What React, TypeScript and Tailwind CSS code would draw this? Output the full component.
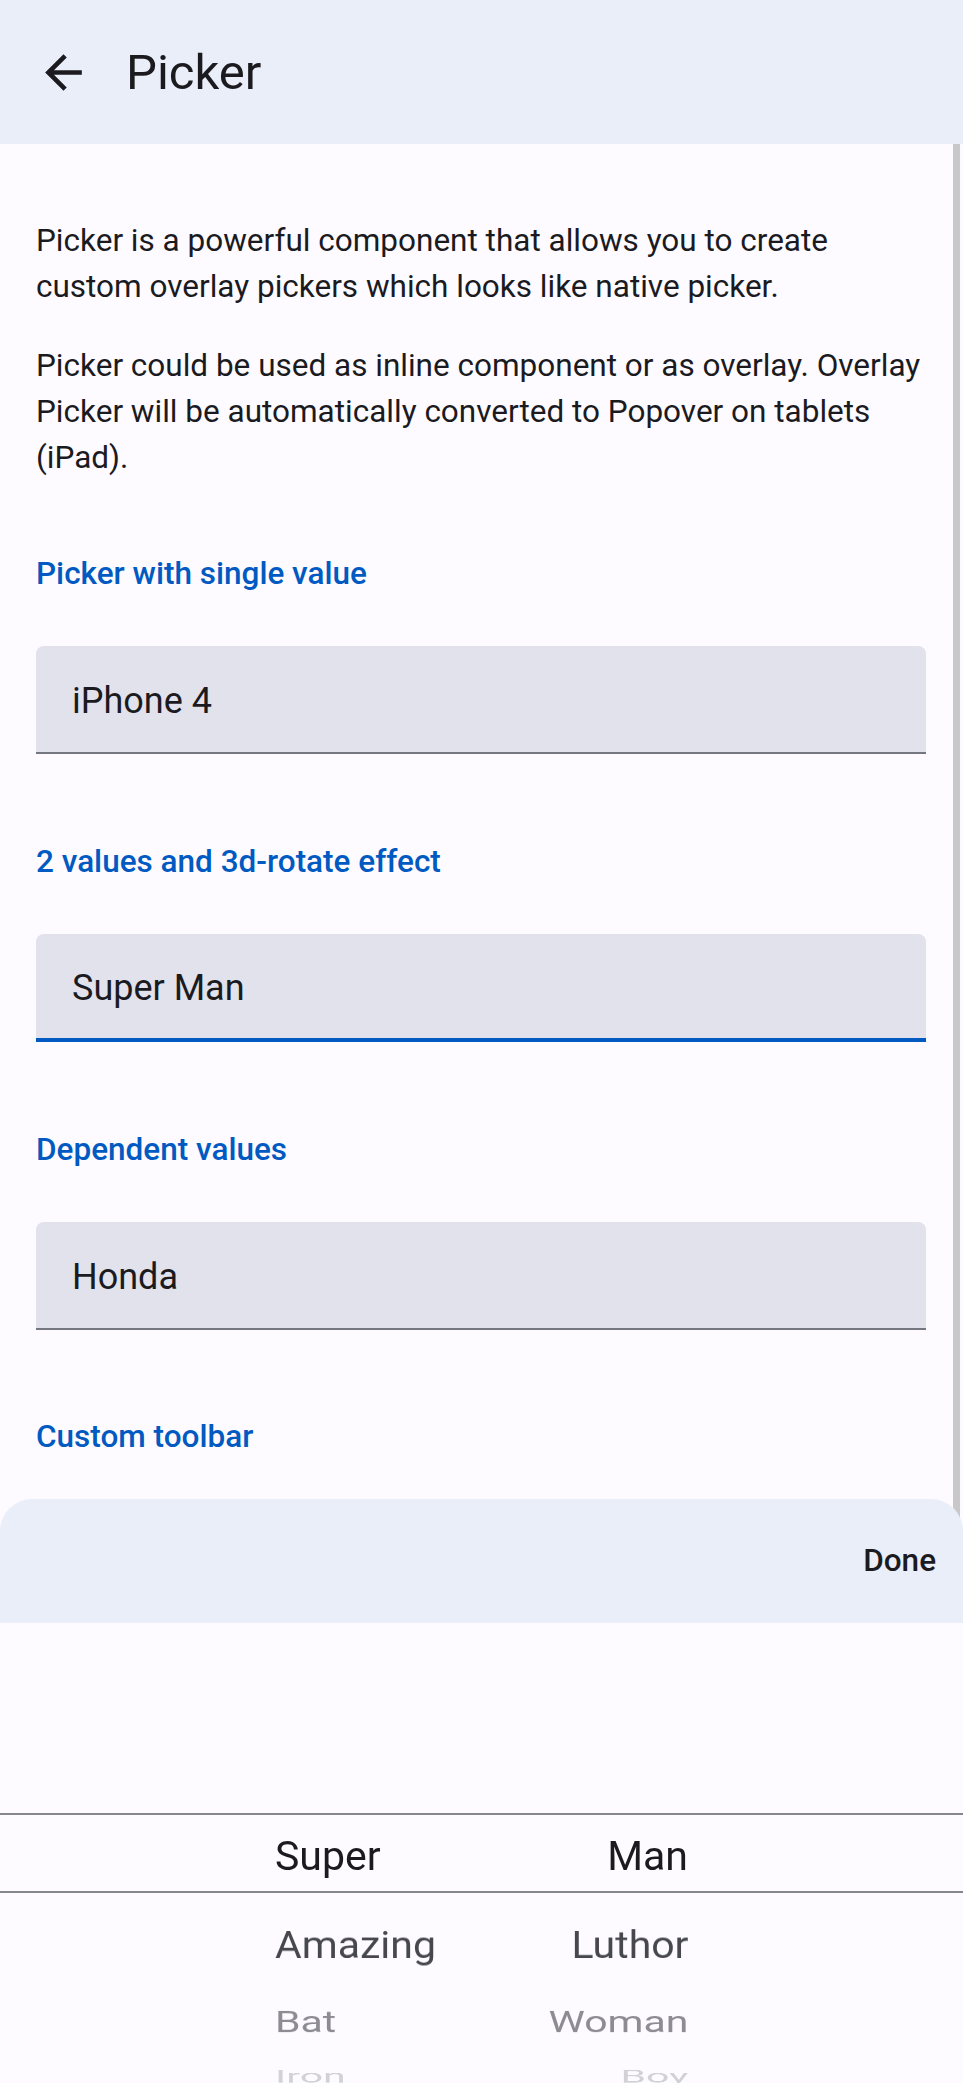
import React from 'react';

const THETA = 21.2;
const RADIUS = 246;
const ITEM_COLORS = ['#1b1b1f', '#47484e', '#8c8c92', '#d2d2d6'];

const firstNames = ['Super', 'Amazing', 'Bat', 'Iron'];
const lastNames = ['Man', 'Luthor', 'Woman', 'Boy'];

function BackArrow() {
  return (
    <svg width="55" height="55" viewBox="0 0 24 24" fill="#1b1b1f" aria-hidden>
      <path d="M20 11H7.83l5.59-5.59L12 4l-8 8 8 8 1.41-1.41L7.83 13H20v-2z" />
    </svg>
  );
}

function Field({ value, active }: { value: string; active?: boolean }) {
  return (
    <div
      className={
        'h-[108px] rounded-t-[8px] bg-[#e1e2ec] flex items-center pl-[36px] pt-[4px] text-[36px] text-[#1b1b1f] ' +
        (active ? 'border-b-4 border-[#005ac1]' : 'border-b-2 border-[#74777f]')
      }
    >
      {value}
    </div>
  );
}

function Block({ title, value, active, first }: { title: string; value: string; active?: boolean; first?: boolean }) {
  return (
    <section className={first ? 'mt-[73px]' : 'mt-[88px]'}>
      <h2 className="h-[40px] leading-[40px] text-[31.5px] font-medium text-[#005ac1]">{title}</h2>
      <div className="mt-[52px]">
        <Field value={value} active={active} />
      </div>
    </section>
  );
}

function WheelColumn({ items, align }: { items: string[]; align: 'left' | 'right' }) {
  return (
    <div className="flex-1 h-full flex items-center pt-[5px]">
      <div className="grid w-full">
        {items.map((item, k) => (
          <div
            key={item}
            className={
              'col-start-1 row-start-1 h-[80px] leading-[80px] text-[41px] whitespace-nowrap ' +
              (align === 'left' ? 'text-left' : 'text-right')
            }
            style={{
              color: ITEM_COLORS[k],
              transform: `rotateX(${-k * THETA}deg)`,
              transformOrigin: `center center -${RADIUS}px`,
            }}
          >
            {item}
          </div>
        ))}
      </div>
    </div>
  );
}

export default function App() {
  return (
    <div className="h-[2083px] w-[963px] flex flex-col overflow-hidden bg-[#fdfbff] font-['Roboto',sans-serif] text-[#1b1b1f]">
      {/* Navbar */}
      <header className="h-[144px] shrink-0 bg-[#eaeef9] flex items-center pl-[36px]">
        <BackArrow />
        <h1 className="ml-[35px] text-[49px] leading-[49px]">Picker</h1>
      </header>

      <main className="relative flex-1">
        <div className="pl-[36px] pr-[37px] pt-[74px]">
          <p className="text-[31.5px] leading-[46px]">
            Picker is a powerful component that allows you to create custom overlay pickers which looks like
            native picker.
          </p>
          <p className="mt-[33px] text-[31.5px] leading-[46px]">
            Picker could be used as inline component or as overlay. Overlay Picker will be automatically converted
            to Popover on tablets (iPad).
          </p>

          <Block first title="Picker with single value" value="iPhone 4" />
          <Block title="2 values and 3d-rotate effect" value="Super Man" active />
          <Block title="Dependent values" value="Honda" />
          <h2 className="mt-[87px] h-[40px] leading-[40px] text-[31.5px] font-medium text-[#005ac1]">
            Custom toolbar
          </h2>
        </div>

        {/* scrollbar */}
        <div className="absolute top-0 bottom-0 right-[3px] w-[7px] bg-[#c8c8ca]" />

        {/* Picker sheet */}
        <div className="absolute left-0 right-0 bottom-0 h-[584px] flex flex-col">
          <div className="h-[124px] shrink-0 rounded-t-[32px] bg-[#eaeef9] flex items-center justify-end pr-[27px]">
            <span className="text-[31.5px] font-medium">Done</span>
          </div>
          <div className="relative flex-1 bg-[#fdfbff]">
            <div className="absolute left-0 right-0 top-[190px] h-[80px] flex flex-col justify-between">
              <div className="h-[2px] bg-[#85878d]" />
              <div className="h-[2px] bg-[#85878d]" />
            </div>
            <div className="mx-auto w-[413px] h-full flex">
              <WheelColumn items={firstNames} align="left" />
              <WheelColumn items={lastNames} align="right" />
            </div>
          </div>
        </div>
      </main>
    </div>
  );
}
